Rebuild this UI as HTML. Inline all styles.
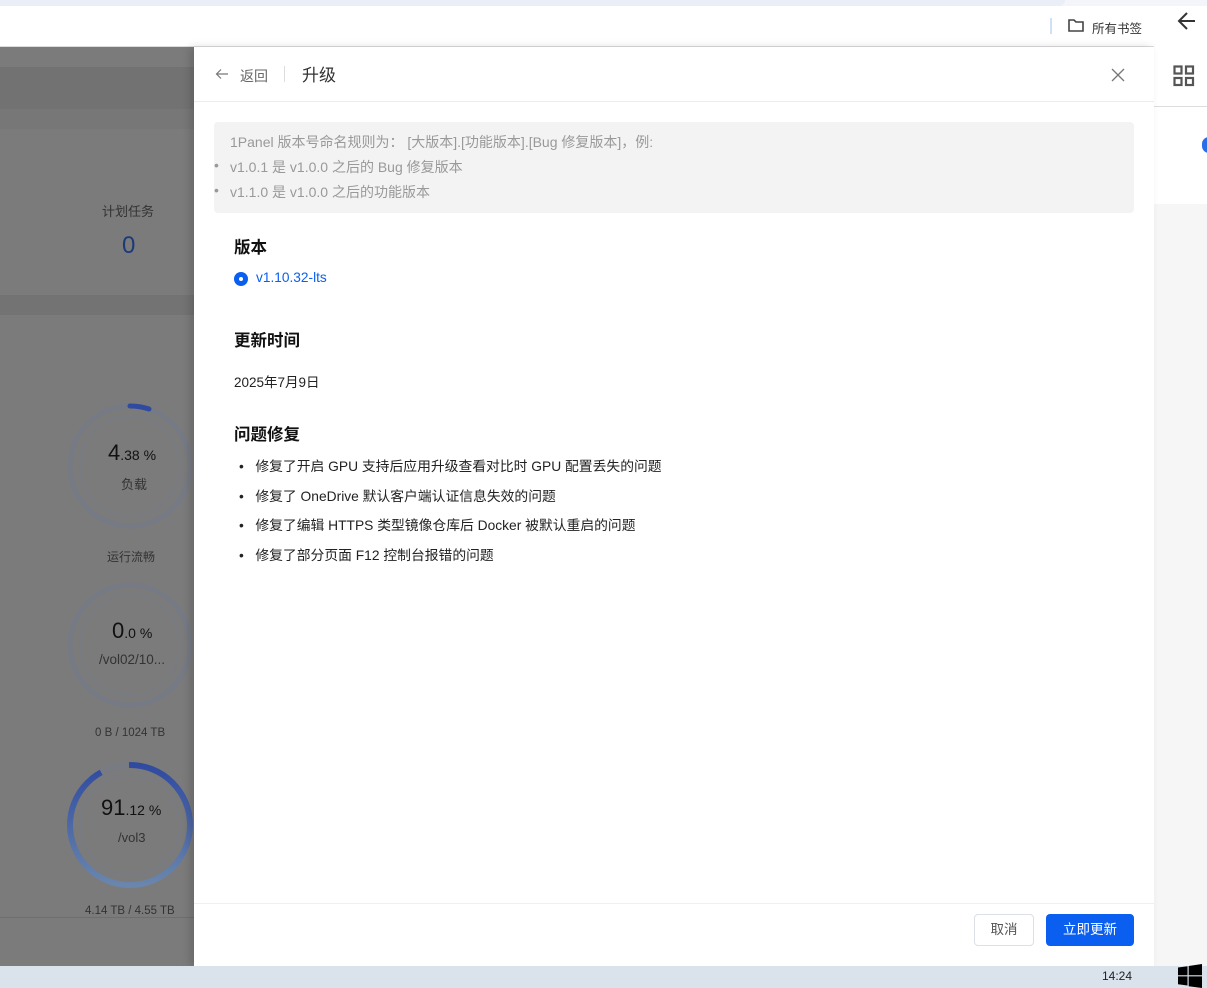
<!DOCTYPE html>
<html><head><meta charset="utf-8"><style>
*{margin:0;padding:0;box-sizing:border-box}
body{width:1207px;height:988px;overflow:hidden;position:relative;background:#fff;font-family:"Liberation Sans","Noto Sans CJK SC",sans-serif;}
.a{position:absolute;white-space:nowrap}
</style></head><body>
<div class="a" style="left:0;top:0;width:1207px;height:6px;background:#f3f5fa"></div>
<div class="a" style="left:0;top:0;width:1065px;height:6px;background:#e9eef7;border-radius:0 0 10px 0"></div>
<div class="a" style="left:0;top:46px;width:1154px;height:1px;background:#dcdcdc"></div>
<div class="a" style="left:1050px;top:18px;width:2px;height:16px;background:#cfe0f7"></div>
<svg class="a" style="left:1067px;top:17px" width="18" height="16" viewBox="0 0 18 16"><path d="M2 3h5l2 2h7v9H2z" fill="none" stroke="#444" stroke-width="1.6"/></svg>
<div class="a" style="left:1092px;top:18px;font-size:12.5px;color:#333">所有书签</div>
<svg class="a" style="left:1176px;top:10px" width="22" height="22" viewBox="0 0 22 22"><path d="M19 11H4M11 3l-8 8 8 8" fill="none" stroke="#333" stroke-width="2"/></svg>
<svg class="a" style="left:1173px;top:65px" width="22" height="22" viewBox="0 0 22 22" fill="none" stroke="#555" stroke-width="2.2"><rect x="1.5" y="1.5" width="7" height="7"/><rect x="13" y="1.5" width="7" height="7"/><rect x="1.5" y="13" width="7" height="7"/><rect x="13" y="13" width="7" height="7"/></svg>
<div class="a" style="left:1154px;top:106px;width:53px;height:1px;background:#ddd"></div>
<div class="a" style="left:1202px;top:137px;width:14px;height:16px;border-radius:7px;background:#2a6de8"></div>
<div class="a" style="left:1154px;top:204px;width:53px;height:762px;background:#f6f6f6"></div>
<div class="a" style="left:0;top:47px;width:194px;height:919px;background:#7b7b7b"></div>
<div class="a" style="left:0;top:67px;width:194px;height:42px;background:#727272"></div>
<div class="a" style="left:0;top:109px;width:194px;height:20px;background:#777"></div>
<div class="a" style="left:0;top:295px;width:194px;height:20px;background:#737373"></div>
<div class="a" style="left:102px;top:201px;font-size:13px;color:#333">计划任务</div>
<div class="a" style="left:122px;top:232px;font-size:24px;color:#1b3a7a">0</div>
<svg class="a" style="left:66px;top:400px" width="140" height="520" viewBox="0 0 140 520">
<defs><linearGradient id="g" x1="0" y1="0" x2="0" y2="1"><stop offset="0" stop-color="#2f4aa0"/><stop offset="1" stop-color="#6a86ad"/></linearGradient></defs>
<circle cx="64" cy="66" r="60" fill="none" stroke="#767a84" stroke-width="5"/>
<circle cx="64" cy="66" r="50" fill="none" stroke="#777b83" stroke-width="1.5"/>
<path d="M64 6 A60 60 0 0 1 83 9" fill="none" stroke="#2f4aa0" stroke-width="5" stroke-linecap="round"/>
<circle cx="64" cy="245" r="60" fill="none" stroke="#767a84" stroke-width="5"/>
<circle cx="64" cy="245" r="50" fill="none" stroke="#777b83" stroke-width="1.5"/>
<circle cx="64" cy="425" r="60" fill="none" stroke="url(#g)" stroke-width="6"/>
<circle cx="64" cy="425" r="50" fill="none" stroke="#777b83" stroke-width="1.5"/>
<path d="M35 372 A60 60 0 0 1 63 365" fill="none" stroke="#797b82" stroke-width="7"/>
</svg>
<div class="a" style="left:108px;top:440px;font-size:22px;color:#111">4<span style="font-size:14px">.38 %</span></div>
<div class="a" style="left:121px;top:474px;font-size:13px;color:#333">负载</div>
<div class="a" style="left:107px;top:548px;font-size:12px;color:#333">运行流畅</div>
<div class="a" style="left:112px;top:618px;font-size:22px;color:#111">0<span style="font-size:14px">.0 %</span></div>
<div class="a" style="left:99px;top:652px;font-size:13.5px;color:#333">/vol02/10...</div>
<div class="a" style="left:95px;top:727px;font-size:11.5px;color:#333">0 B / 1024 TB</div>
<div class="a" style="left:101px;top:795px;font-size:22px;color:#111">91<span style="font-size:14px">.12 %</span></div>
<div class="a" style="left:118px;top:830px;font-size:13px;color:#333">/vol3</div>
<div class="a" style="left:85px;top:905px;font-size:11.5px;color:#333">4.14 TB / 4.55 TB</div>
<div class="a" style="left:0;top:917px;width:194px;height:1px;background:#6e6e6e"></div>
<div class="a" style="left:194px;top:47px;width:960px;height:919px;background:#fff;box-shadow:-4px 0 8px rgba(0,0,0,.15)"></div>
<svg class="a" style="left:215px;top:67px" width="14" height="14" viewBox="0 0 14 14"><path d="M13 7H2M6 2.5 1.5 7 6 11.5" fill="none" stroke="#777" stroke-width="1.2"/></svg>
<div class="a" style="left:240px;top:66px;font-size:14px;color:#666">返回</div>
<div class="a" style="left:284px;top:66px;width:1px;height:16px;background:#ddd"></div>
<div class="a" style="left:302px;top:61px;font-size:17px;color:#333">升级</div>
<svg class="a" style="left:1111px;top:68px" width="14" height="14" viewBox="0 0 14 14"><path d="M1 1 13 13M13 1 1 13" stroke="#777" stroke-width="1.3"/></svg>
<div class="a" style="left:194px;top:101px;width:960px;height:1px;background:#ececec"></div>
<div class="a" style="left:214px;top:122px;width:920px;height:91px;background:#f3f3f3;border-radius:4px"></div>
<div class="a" style="left:230px;top:132px;font-size:14px;color:#999">1Panel 版本号命名规则为： [大版本].[功能版本].[Bug 修复版本]，例:</div>
<div class="a" style="left:214px;top:157px;font-size:14px;color:#999">•</div>
<div class="a" style="left:230px;top:157px;font-size:14px;color:#999">v1.0.1 是 v1.0.0 之后的 Bug 修复版本</div>
<div class="a" style="left:214px;top:182px;font-size:14px;color:#999">•</div>
<div class="a" style="left:230px;top:182px;font-size:14px;color:#999">v1.1.0 是 v1.0.0 之后的功能版本</div>
<div class="a" style="left:234px;top:234px;font-size:16.5px;font-weight:bold;color:#111">版本</div>
<div class="a" style="left:234px;top:272px;width:14px;height:14px;border-radius:50%;background:#0a5ff0"></div>
<div class="a" style="left:239px;top:277px;width:4px;height:4px;border-radius:50%;background:#fff"></div>
<div class="a" style="left:256px;top:270px;font-size:13.7px;color:#0a5ff0">v1.10.32-lts</div>
<div class="a" style="left:234px;top:327px;font-size:16.5px;font-weight:bold;color:#111">更新时间</div>
<div class="a" style="left:234px;top:371px;font-size:13.5px;color:#222">2025年7月9日</div>
<div class="a" style="left:234px;top:421px;font-size:16.5px;font-weight:bold;color:#111">问题修复</div>
<div class="a" style="left:239px;top:452px;font-size:13.8px;color:#222;line-height:29.5px">
•&nbsp;&nbsp;&nbsp;修复了开启 GPU 支持后应用升级查看对比时 GPU 配置丢失的问题<br>
•&nbsp;&nbsp;&nbsp;修复了 OneDrive 默认客户端认证信息失效的问题<br>
•&nbsp;&nbsp;&nbsp;修复了编辑 HTTPS 类型镜像仓库后 Docker 被默认重启的问题<br>
•&nbsp;&nbsp;&nbsp;修复了部分页面 F12 控制台报错的问题</div>
<div class="a" style="left:194px;top:903px;width:960px;height:1px;background:#efefef"></div>
<div class="a" style="left:974px;top:914px;width:60px;height:32px;border:1px solid #dcdfe6;border-radius:4px;font-size:13.5px;color:#555;text-align:center;line-height:30px">取消</div>
<div class="a" style="left:1046px;top:914px;width:88px;height:32px;background:#0a5ff0;border-radius:4px;font-size:13.5px;color:#fff;text-align:center;line-height:32px">立即更新</div>
<div class="a" style="left:0;top:966px;width:1207px;height:22px;background:#dae2ec"></div>
<div class="a" style="left:1102px;top:969px;font-size:12px;color:#222">14:24</div>
<svg class="a" style="left:1178px;top:964px" width="24" height="24" viewBox="0 0 24 24" fill="#000"><path d="M0 3.5 9.5 2.2V11.2H0zM10.7 2 24 0v11.2H10.7zM0 12.4h9.5v9.1L0 20.2zM10.7 12.4H24V24l-13.3-1.8z"/></svg>
</body></html>
